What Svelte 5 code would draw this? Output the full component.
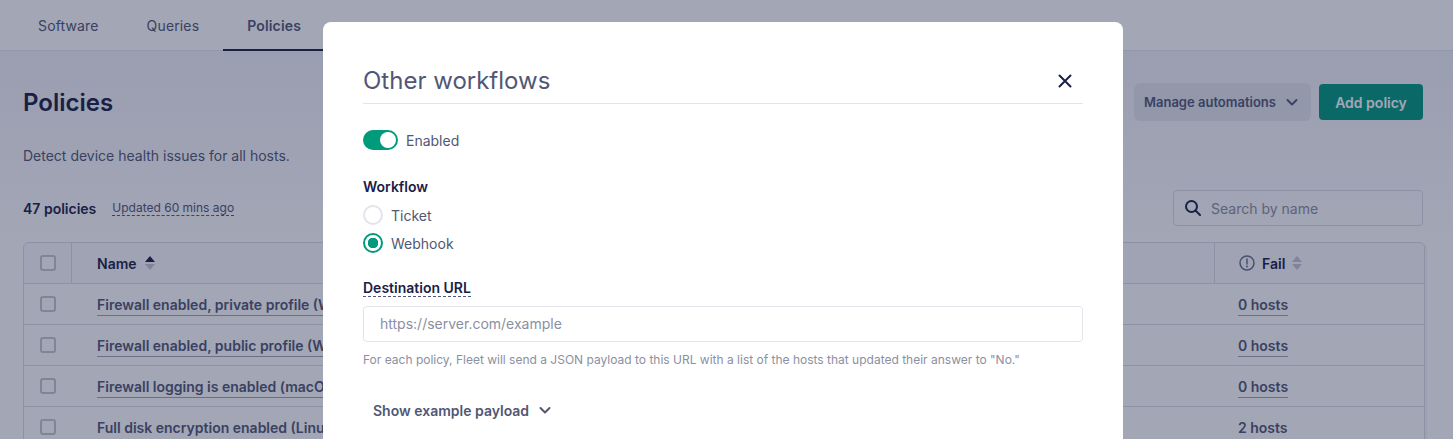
<script>
	const policies = [
		{ name: 'Firewall enabled, private profile (Windows)', fail: '0 hosts' },
		{ name: 'Firewall enabled, public profile (Windows)', fail: '0 hosts' },
		{ name: 'Firewall logging is enabled (macOS)', fail: '0 hosts' },
		{ name: 'Full disk encryption enabled (Linux)', fail: '2 hosts' }
	];
	const tabs = ['Software', 'Queries', 'Policies'];
</script>

<div class="page">
	<nav class="tabs">
		{#each tabs as tab}
			<span class="tab" class:active={tab === 'Policies'}>{tab}</span>
		{/each}
	</nav>

	<main class="content">
		<div class="head">
			<h1>Policies</h1>
			<div class="actions">
				<button class="manage">
					Manage automations
					<svg width="16" height="16" viewBox="0 0 16 16" fill="none"><path d="M3.500 6l4.500 4.500L12.500 6" stroke="#515774" stroke-width="2" stroke-linecap="round" stroke-linejoin="round" /></svg>
				</button>
				<button class="add">Add policy</button>
			</div>
		</div>
		<p class="desc">Detect device health issues for all hosts.</p>

		<div class="toolbar">
			<div class="counts">
				<b>47 policies</b>
				<span class="updated">Updated 60 mins ago</span>
			</div>
			<div class="search">
				<svg width="16" height="16" viewBox="0 0 16 16" fill="none"><circle cx="6.500" cy="6.500" r="5.500" stroke="#192147" stroke-width="2" /><path d="M10.500 10.500l4.500 4.500" stroke="#192147" stroke-width="2" stroke-linecap="round" /></svg>
				<span>Search by name</span>
			</div>
		</div>

		<div class="table">
			<div class="row header">
				<div class="cell check"><span class="box"></span></div>
				<div class="cell name">
					Name
					<svg width="10" height="16" viewBox="0 0 10 16"><path d="M5 1l5 6H0z" fill="#192147" /><path d="M5 15L0 9h10z" fill="#c5c7d1" /></svg>
				</div>
				<div class="cell fail">
					<svg width="16" height="16" viewBox="0 0 16 16" fill="none"><circle cx="8" cy="8" r="7" stroke="#6c7189" stroke-width="1.500" /><path d="M8 4v5" stroke="#6c7189" stroke-width="1.500" stroke-linecap="round" /><circle cx="8" cy="11.500" r="1" fill="#6c7189" /></svg>
					<span>Fail</span>
					<svg width="10" height="16" viewBox="0 0 10 16"><path d="M5 1l5 6H0z" fill="#c5c7d1" /><path d="M5 15L0 9h10z" fill="#c5c7d1" /></svg>
				</div>
			</div>
			{#each policies as p}
				<div class="row">
					<div class="cell check"><span class="box"></span></div>
					<div class="cell"><span class="link">{p.name}</span></div>
					<div class="cell last"><span class="link">{p.fail}</span></div>
				</div>
			{/each}
		</div>
	</main>

	<div class="overlay">
		<div class="modal">
			<div class="modal-head">
				<h2>Other workflows</h2>
				<svg width="16" height="16" viewBox="0 0 16 16" fill="none"><path d="M2.500 2.500l11 11M13.500 2.500l-11 11" stroke="#192147" stroke-width="2" stroke-linecap="round" /></svg>
			</div>

			<div class="enabled">
				<span class="toggle"><span class="knob"></span></span>
				<span>Enabled</span>
			</div>

			<div class="label">Workflow</div>
			<div class="radio"><span class="dot"></span>Ticket</div>
			<div class="radio"><span class="dot on"></span>Webhook</div>

			<div class="field">
				<span class="label dashed">Destination URL</span>
				<div class="input">https://server.com/example</div>
				<div class="help">For each policy, Fleet will send a JSON payload to this URL with a list of the hosts that updated their answer to "No."</div>
			</div>

			<button class="payload">
				Show example payload
				<svg width="16" height="16" viewBox="0 0 16 16" fill="none"><path d="M3.500 6l4.500 4.500L12.500 6" stroke="#515774" stroke-width="2" stroke-linecap="round" stroke-linejoin="round" /></svg>
			</button>
		</div>
	</div>
</div>

<style>
	:global(body) {
		margin: 0;
		overflow: hidden;
		background: #fff;
	}

	.page {
		height: 100vh;
		overflow: hidden;
		font-family: Inter, 'Liberation Sans', sans-serif;
		font-size: 14px;
		color: #192147;
		background: #fff;
	}

	.tabs {
		display: flex;
		height: 50px;
		padding-left: 14px;
		border-bottom: 1px solid #e2e4ea;
		background: #fff;
	}

	.tab {
		display: flex;
		align-items: center;
		padding: 2px 24px 0;
		color: #515774;
		letter-spacing: 0.15px;
		border-bottom: 2px solid transparent;
		box-sizing: border-box;
		height: 51px;
	}

	.tab.active {
		font-weight: 600;
		border-bottom-color: #192147;
		padding-right: 30px;
	}

	.content {
		padding: 33px 30px 0 23px;
		background: linear-gradient(#f0f2f8, #fff 190px);
	}

	.head {
		display: flex;
		justify-content: space-between;
		align-items: flex-start;
		height: 38px;
	}

	h1 {
		margin: 0;
		font-size: 24px;
		font-weight: 600;
		line-height: 38px;
	}

	.actions {
		display: flex;
		align-items: center;
		gap: 8px;
		margin-top: -1px;
	}

	button {
		font-family: inherit;
		border: 0;
		cursor: pointer;
	}

	.manage {
		display: flex;
		align-items: center;
		justify-content: space-between;
		width: 177px;
		height: 38px;
		padding: 0 11px 0 10px;
		border-radius: 6px;
		background: #e5e7ed;
		color: #515774;
		font-size: 13px;
		font-weight: 600;
	}

	.add {
		width: 104px;
		height: 36px;
		border-radius: 4px;
		background: #009a7d;
		color: #fff;
		font-size: 14px;
		font-weight: 600;
	}

	.desc {
		margin: 24px 0 0;
		color: #515774;
		line-height: 20px;
	}

	.toolbar {
		display: flex;
		justify-content: space-between;
		align-items: center;
		margin-top: 24px;
		height: 36px;
	}

	.counts {
		display: flex;
		align-items: center;
		gap: 16px;
	}

	.counts b {
		font-weight: 600;
	}

	.updated {
		font-size: 12px;
		color: #515774;
		border-bottom: 1px dashed #515774;
		line-height: 15px;
	}

	.search {
		display: flex;
		align-items: center;
		gap: 10px;
		box-sizing: border-box;
		width: 250px;
		height: 36px;
		padding: 0 11px;
		border: 1px solid #dbdde5;
		border-radius: 4px;
		color: #8b8fa2;
	}

	.table {
		margin: 16px -2px 0 0;
		border: 1px solid #dbdde5;
		border-radius: 6px 6px 0 0;
		box-shadow: 2px 0 0 #f4f5f7;
	}

	.row {
		display: grid;
		grid-template-columns: 48px 1fr 210px;
		height: 40px;
		border-top: 1px solid #dbdde5;
	}

	.row.header {
		border-top: 0;
		background: #f9fafc;
		border-radius: 6px 6px 0 0;
	}

	.cell {
		display: flex;
		align-items: center;
		padding-left: 25px;
		font-weight: 600;
		color: #515774;
		min-width: 0;
	}

	.row:not(.header) .cell:not(.check) {
		padding-top: 2px;
	}

	.cell.check {
		padding-left: 16px;
	}

	.cell.last {
		padding-left: 24px;
	}

	.header .cell.check {
		border-right: 1px solid #dbdde5;
	}

	.cell.name {
		gap: 8px;
		color: #192147;
	}

	.cell.fail {
		gap: 7px;
		padding-left: 24px;
		color: #192147;
		border-left: 1px solid #dbdde5;
	}

	.box {
		box-sizing: border-box;
		width: 16px;
		height: 16px;
		border: 2px solid #c5c7d1;
		border-radius: 3px;
		background: #fff;
	}

	.link {
		border-bottom: 1px solid #a0a3b4;
		line-height: 20px;
		white-space: nowrap;
	}

	.row:last-child .link {
		border-bottom-color: transparent;
	}

	.overlay {
		position: fixed;
		inset: 0;
		display: flex;
		justify-content: center;
		align-items: flex-start;
		padding-right: 7px;
		overflow: hidden;
		background: rgba(25, 33, 71, 0.4);
		backdrop-filter: blur(0.6px);
	}

	.modal {
		box-sizing: border-box;
		width: 800px;
		margin-top: 22px;
		padding: 40px 40px 60px;
		background: #fff;
		border-radius: 8px;
		color: #515774;
	}

	.modal-head {
		display: flex;
		justify-content: space-between;
		align-items: center;
		height: 41px;
		padding-right: 10px;
		padding-bottom: 2px;
		border-bottom: 1px solid #e2e4ea;
		margin-top: -2px;
	}

	h2 {
		margin: 0;
		font-size: 24px;
		font-weight: 400;
		line-height: 38px;
		color: #515774;
	}

	.enabled {
		display: flex;
		align-items: center;
		gap: 8px;
		margin-top: 26px;
		height: 20px;
	}

	.toggle {
		display: flex;
		justify-content: flex-end;
		align-items: center;
		box-sizing: border-box;
		width: 35px;
		height: 20px;
		padding: 2px;
		border-radius: 10px;
		background: #009a7d;
	}

	.knob {
		width: 16px;
		height: 16px;
		border-radius: 50%;
		background: #fff;
	}

	.label {
		margin-top: 27px;
		font-weight: 600;
		color: #192147;
		line-height: 20px;
	}

	.radio {
		display: flex;
		align-items: center;
		gap: 8px;
		height: 20px;
		margin-top: 8px;
	}

	.dot {
		display: block;
		box-sizing: border-box;
		width: 20px;
		height: 20px;
		border: 2px solid #e2e4ea;
		border-radius: 50%;
	}

	.dot.on {
		border-color: #009a7d;
		background: radial-gradient(circle, #009a7d 0 5px, #fff 5.500px);
	}

	.field {
		margin-top: 26px;
	}

	.dashed {
		display: inline-block;
		margin-top: 0;
		line-height: 17px;
		border-bottom: 1px dashed #515774;
	}

	.input {
		box-sizing: border-box;
		height: 36px;
		margin-top: 9px;
		padding: 0 16px;
		line-height: 34px;
		border: 1px solid #e2e4ea;
		border-radius: 4px;
		color: #8b8fa2;
	}

	.help {
		margin-top: 9px;
		font-size: 12px;
		line-height: 18px;
		color: #8b8fa2;
	}

	.payload {
		display: flex;
		align-items: center;
		gap: 8px;
		margin-top: 31px;
		padding: 0 10px;
		height: 20px;
		background: none;
		color: #515774;
		font-size: 14px;
		font-weight: 600;
	}
</style>
